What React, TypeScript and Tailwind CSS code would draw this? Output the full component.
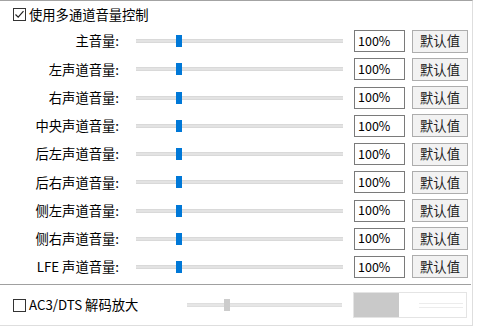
import React from "react";

const rows = [
  "主音量:",
  "左声道音量:",
  "右声道音量:",
  "中央声道音量:",
  "后左声道音量:",
  "后右声道音量:",
  "侧左声道音量:",
  "侧右声道音量:",
  "LFE 声道音量:",
];

function Checkbox({ checked }: { checked?: boolean }) {
  return (
    <div className="w-[13px] h-[13px] border border-[#333333] bg-white flex items-center justify-center shrink-0">
      {checked && (
        <svg width="11" height="11" viewBox="0 0 11 11">
          <path d="M1.5 5.5 L4.2 8.2 L9.5 2.2" fill="none" stroke="#222" strokeWidth="1.2" />
        </svg>
      )}
    </div>
  );
}

export default function App() {
  return (
    <div
      className="w-[481px] h-[332px] bg-white text-black text-[13.3px] leading-none"
      style={{ fontFamily: '"Noto Sans CJK SC", "Noto Sans", sans-serif' }}
    >
      <div className="w-[473px] h-[326px] border-t border-t-[#a3a3a3] border-r border-r-[#dedede] border-b border-b-[#dedede] flex flex-col">
        <div className="h-[26px] pt-[2px] flex items-center pl-[13px]">
          <Checkbox checked />
          <span className="ml-[3px]">使用多通道音量控制</span>
        </div>
        {rows.map((r) => (
          <div key={r} className="h-[28.25px] flex items-center">
            <div className="w-[119px] text-right whitespace-nowrap">{r}</div>
            <div className="ml-[17px] w-[207px] h-[14px] relative flex items-center">
              <div className="w-full h-[4px] bg-[#e3e3e3] border-y border-[#d9d9d9]" />
              <div className="absolute left-[40px] top-[1px] w-[6px] h-[12px] bg-[#0078d7]" />
            </div>
            <div className="ml-[11px] w-[51px] h-[22px] border border-[#7a7a7a] flex items-center pl-[3px] text-[12.5px]">
              100%
            </div>
            <div className="ml-[7px] w-[56px] h-[23px] border border-[#adadad] bg-[#f2f2f2] flex items-center justify-center text-[#222]">
              默认值
            </div>
          </div>
        ))}
        <div className="mt-[3px] h-px bg-[#a0a0a0] w-[471px]" />
        <div className="h-[40px] flex items-center">
          <div className="pl-[13px] flex items-center w-[187px]">
            <Checkbox />
            <span className="ml-[3px]">AC3/DTS 解码放大</span>
          </div>
          <div className="w-[155px] h-[14px] relative flex items-center">
            <div className="w-full h-[4px] bg-[#e6e6e6] border-y border-[#dedede]" />
            <div className="absolute left-[37px] top-[1px] w-[6px] h-[12px] bg-[#cccccc]" />
          </div>
          <div className="ml-[11px] w-[114px] h-[26px] border border-[#e4e4e4] flex">
            <div className="w-[45px] h-full bg-[#c9c9c9]" />
            <div className="flex-1 flex flex-col justify-center gap-[3px] pl-[20px] pr-[3px]">
              <div className="h-px bg-[#ececec]" />
              <div className="h-px bg-[#ececec]" />
            </div>
          </div>
        </div>
      </div>
    </div>
  );
}
